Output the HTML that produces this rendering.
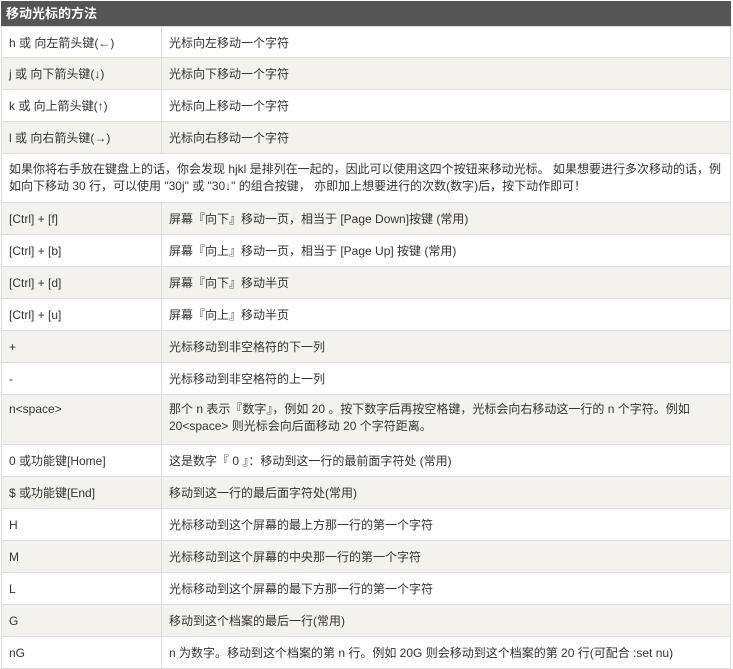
<!DOCTYPE html>
<html><head><meta charset="utf-8"><style>
html,body{margin:0;padding:0;background:#fff;width:733px;height:665px;overflow:hidden}
body{font-family:"Liberation Sans","Noto Sans CJK SC",sans-serif;font-size:12px;color:#333}
.t{position:absolute;left:1px;top:1px;width:730px;border-left:1px solid #ddd;border-right:1px solid #ddd;box-sizing:border-box}
.h{height:25px;background:#555;color:#fff;font-weight:bold;font-size:13px;line-height:25px;padding-left:5px;margin:0 -1px}
.r{display:flex;height:32px;border-bottom:1px solid #ddd;box-sizing:border-box}
.r.g{background:#f3f2ee}
.a{width:160px;border-right:1px solid #ddd;padding:0 7px;box-sizing:border-box;display:flex;align-items:center}
.b{flex:1;padding:0 7px;display:flex;align-items:center}
.r.tall{height:50px}
.r.tall .a,.r.tall .b{align-items:flex-start;padding-top:6px;line-height:17px}
.p{height:49px;border-bottom:1px solid #ddd;box-sizing:border-box;padding:7px 7px 0;line-height:17px}
</style></head><body>
<div class="t">
<div class="h">移动光标的方法</div>
<div class="r" style="border-top:1px solid #ddd"><div class="a">h 或 向左箭头键(←)</div><div class="b">光标向左移动一个字符</div></div>
<div class="r g"><div class="a">j 或 向下箭头键(↓)</div><div class="b">光标向下移动一个字符</div></div>
<div class="r"><div class="a">k 或 向上箭头键(↑)</div><div class="b">光标向上移动一个字符</div></div>
<div class="r g"><div class="a">l 或 向右箭头键(→)</div><div class="b">光标向右移动一个字符</div></div>
<div class="p">如果你将右手放在键盘上的话，你会发现 hjkl 是排列在一起的，因此可以使用这四个按钮来移动光标。 如果想要进行多次移动的话，例如向下移动 30 行，可以使用 "30j" 或 "30↓" 的组合按键， 亦即加上想要进行的次数(数字)后，按下动作即可！</div>
<div class="r g"><div class="a">[Ctrl] + [f]</div><div class="b">屏幕『向下』移动一页，相当于 [Page Down]按键 (常用)</div></div>
<div class="r"><div class="a">[Ctrl] + [b]</div><div class="b">屏幕『向上』移动一页，相当于 [Page Up] 按键 (常用)</div></div>
<div class="r g"><div class="a">[Ctrl] + [d]</div><div class="b">屏幕『向下』移动半页</div></div>
<div class="r"><div class="a">[Ctrl] + [u]</div><div class="b">屏幕『向上』移动半页</div></div>
<div class="r g"><div class="a">+</div><div class="b">光标移动到非空格符的下一列</div></div>
<div class="r"><div class="a">-</div><div class="b">光标移动到非空格符的上一列</div></div>
<div class="r g tall"><div class="a">n&lt;space&gt;</div><div class="b">那个 n 表示『数字』，例如 20 。按下数字后再按空格键，光标会向右移动这一行的 n 个字符。例如 20&lt;space&gt; 则光标会向后面移动 20 个字符距离。</div></div>
<div class="r"><div class="a">0 或功能键[Home]</div><div class="b">这是数字『 0 』：移动到这一行的最前面字符处 (常用)</div></div>
<div class="r g"><div class="a">$ 或功能键[End]</div><div class="b">移动到这一行的最后面字符处(常用)</div></div>
<div class="r"><div class="a">H</div><div class="b">光标移动到这个屏幕的最上方那一行的第一个字符</div></div>
<div class="r g"><div class="a">M</div><div class="b">光标移动到这个屏幕的中央那一行的第一个字符</div></div>
<div class="r"><div class="a">L</div><div class="b">光标移动到这个屏幕的最下方那一行的第一个字符</div></div>
<div class="r g"><div class="a">G</div><div class="b">移动到这个档案的最后一行(常用)</div></div>
<div class="r"><div class="a">nG</div><div class="b">n 为数字。移动到这个档案的第 n 行。例如 20G 则会移动到这个档案的第 20 行(可配合 :set nu)</div></div>
</div>
</body></html>
